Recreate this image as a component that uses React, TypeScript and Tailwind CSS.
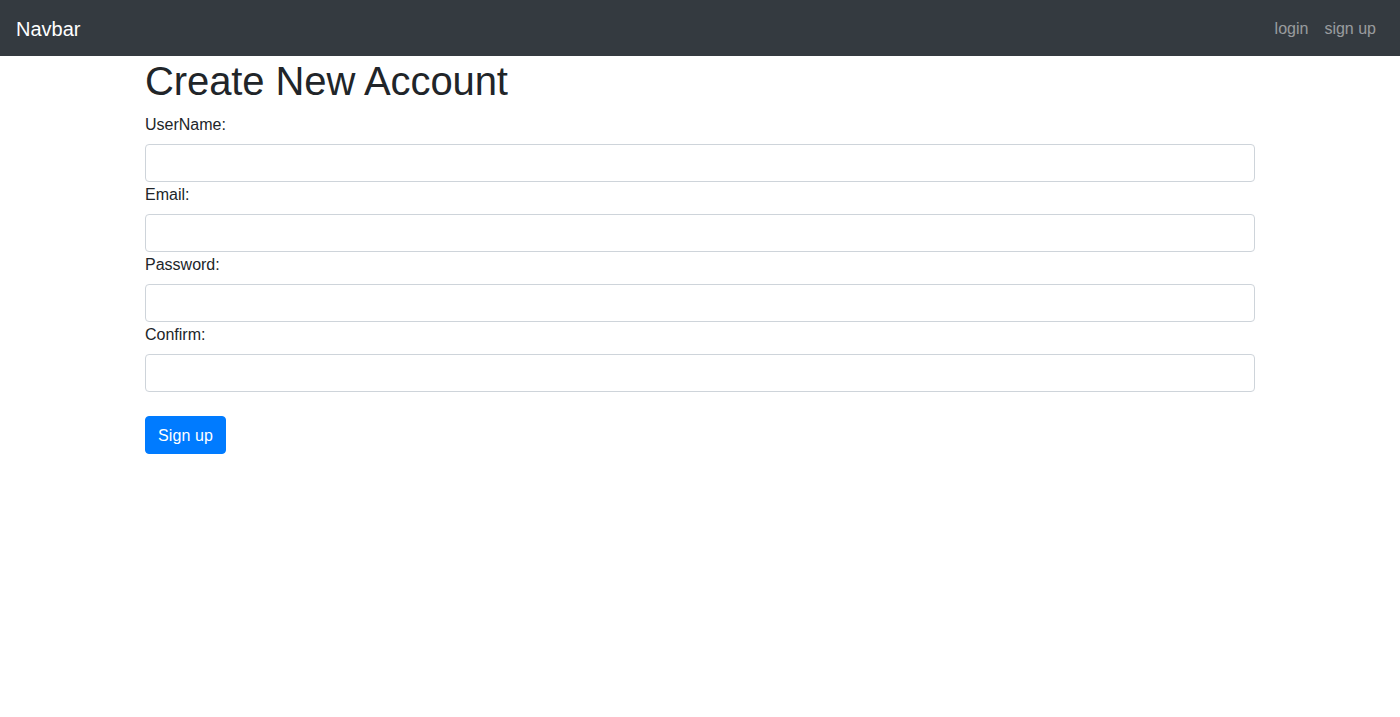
export default function App() {
  const fields = ["UserName:", "Email:", "Password:", "Confirm:"];
  return (
    <div className="min-h-[717px] bg-white text-[#212529] text-base leading-6" style={{ fontFamily: "'Liberation Sans', Arial, sans-serif" }}>
      <nav className="h-14 bg-[#343a40] flex items-center justify-between px-4">
        <a className="text-white text-xl leading-[30px] pt-[6px] pb-[4px]">Navbar</a>
        <div className="flex">
          <a className="px-2 pt-[9px] pb-[7px] text-white/50">login</a>
          <a className="px-2 pt-[9px] pb-[7px] text-white/50">sign up</a>
        </div>
      </nav>
      <div className="w-[1140px] mx-auto px-[15px]">
        <h1 className="text-[40px] leading-[48px] font-normal pt-px mb-[7px] tracking-[-0.1px]">Create New Account</h1>
        <form>
          {fields.map((f) => (
            <div key={f}>
              <label className="block pt-px mb-[7px]">{f}</label>
              <input className="block w-full h-[38px] border border-[#ced4da] rounded-[4px] px-3 bg-white" />
            </div>
          ))}
          <button type="button" className="mt-6 bg-[#007bff] text-white rounded-[4px] px-3 pt-[7px] pb-[5px] leading-6 border border-[#007bff] tracking-[0.1px]">Sign up</button>
        </form>
      </div>
    </div>
  );
}
